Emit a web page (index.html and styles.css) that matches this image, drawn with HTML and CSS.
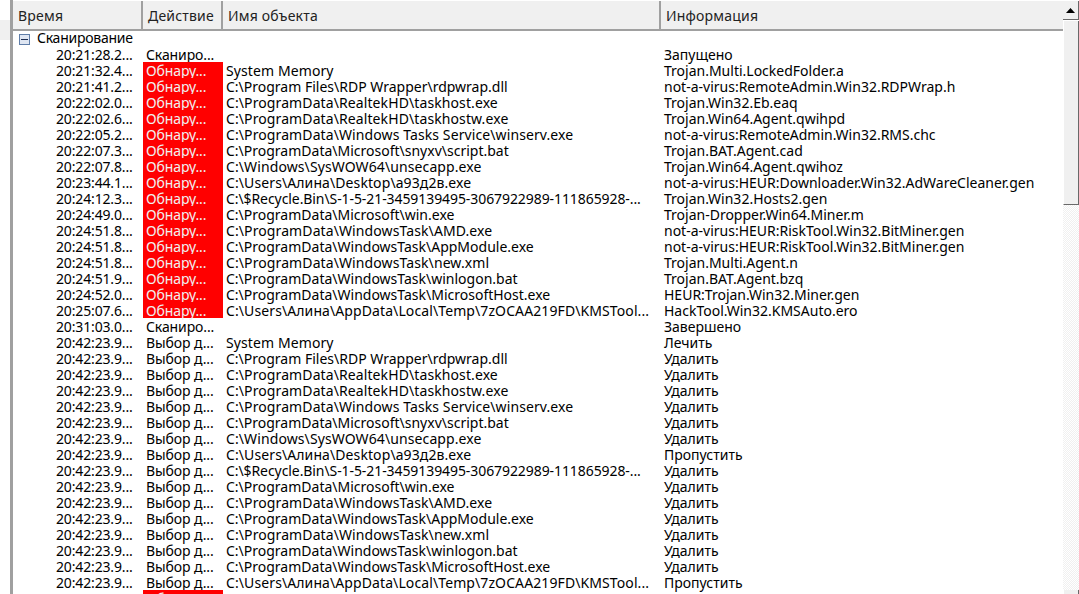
FILE: index.html
```html
<!DOCTYPE html>
<html lang="ru">
<head>
<meta charset="utf-8">
<title>Отчёт</title>
<link rel="stylesheet" href="styles.css">
</head>
<body>
<div class="app">
  <div class="strip"><div class="strip-block"></div></div>
  <div class="main">
    <div class="head">
      <div class="hc hc-time">Время</div>
      <div class="hc hc-act">Действие</div>
      <div class="hc hc-obj">Имя объекта</div>
      <div class="hc hc-info">Информация</div>
    </div>
    <div class="list">
      <div class="group"><svg class="tog" width="11" height="11" viewBox="0 0 11 11"><rect x="0.5" y="0.5" width="10" height="10" fill="#dfe6f2" stroke="#5f7da8"/><rect x="2" y="5" width="7" height="1" fill="#1c2c50"/></svg><span>Сканирование</span></div>
      <div class="row"><span>20:21:28.2...</span><span>Сканиро...</span><span></span><span>Запущено</span></div>
      <div class="row det"><span>20:21:32.4...</span><span>Обнару...</span><span>System Memory</span><span>Trojan.Multi.LockedFolder.a</span></div>
      <div class="row det"><span>20:21:41.2...</span><span>Обнару...</span><span class="snug">C:\Program Files\RDP Wrapper\rdpwrap.dll</span><span>not-a-virus:RemoteAdmin.Win32.RDPWrap.h</span></div>
      <div class="row det"><span>20:22:02.0...</span><span>Обнару...</span><span>C:\ProgramData\RealtekHD\taskhost.exe</span><span>Trojan.Win32.Eb.eaq</span></div>
      <div class="row det"><span>20:22:02.6...</span><span>Обнару...</span><span>C:\ProgramData\RealtekHD\taskhostw.exe</span><span>Trojan.Win64.Agent.qwihpd</span></div>
      <div class="row det"><span>20:22:05.2...</span><span>Обнару...</span><span>C:\ProgramData\Windows Tasks Service\winserv.exe</span><span>not-a-virus:RemoteAdmin.Win32.RMS.chc</span></div>
      <div class="row det"><span>20:22:07.3...</span><span>Обнару...</span><span class="snug">C:\ProgramData\Microsoft\snyxv\script.bat</span><span>Trojan.BAT.Agent.cad</span></div>
      <div class="row det"><span>20:22:07.8...</span><span>Обнару...</span><span>C:\Windows\SysWOW64\unsecapp.exe</span><span>Trojan.Win64.Agent.qwihoz</span></div>
      <div class="row det"><span>20:23:44.1...</span><span>Обнару...</span><span>C:\Users\Алина\Desktop\а93д2в.exe</span><span>not-a-virus:HEUR:Downloader.Win32.AdWareCleaner.gen</span></div>
      <div class="row det"><span>20:24:12.3...</span><span>Обнару...</span><span class="tight">C:\$Recycle.Bin\S-1-5-21-3459139495-3067922989-111865928-...</span><span>Trojan.Win32.Hosts2.gen</span></div>
      <div class="row det"><span>20:24:49.0...</span><span>Обнару...</span><span class="snug">C:\ProgramData\Microsoft\win.exe</span><span>Trojan-Dropper.Win64.Miner.m</span></div>
      <div class="row det"><span>20:24:51.8...</span><span>Обнару...</span><span>C:\ProgramData\WindowsTask\AMD.exe</span><span>not-a-virus:HEUR:RiskTool.Win32.BitMiner.gen</span></div>
      <div class="row det"><span>20:24:51.8...</span><span>Обнару...</span><span class="snug">C:\ProgramData\WindowsTask\AppModule.exe</span><span>not-a-virus:HEUR:RiskTool.Win32.BitMiner.gen</span></div>
      <div class="row det"><span>20:24:51.8...</span><span>Обнару...</span><span>C:\ProgramData\WindowsTask\new.xml</span><span>Trojan.Multi.Agent.n</span></div>
      <div class="row det"><span>20:24:51.9...</span><span>Обнару...</span><span class="snug">C:\ProgramData\WindowsTask\winlogon.bat</span><span>Trojan.BAT.Agent.bzq</span></div>
      <div class="row det"><span>20:24:52.0...</span><span>Обнару...</span><span class="snug">C:\ProgramData\WindowsTask\MicrosoftHost.exe</span><span>HEUR:Trojan.Win32.Miner.gen</span></div>
      <div class="row det"><span>20:25:07.6...</span><span>Обнару...</span><span>C:\Users\Алина\AppData\Local\Temp\7zOCAA219FD\KMSTool...</span><span>HackTool.Win32.KMSAuto.ero</span></div>
      <div class="row"><span>20:31:03.0...</span><span>Сканиро...</span><span></span><span>Завершено</span></div>
      <div class="row"><span>20:42:23.9...</span><span>Выбор д...</span><span>System Memory</span><span>Лечить</span></div>
      <div class="row"><span>20:42:23.9...</span><span>Выбор д...</span><span class="snug">C:\Program Files\RDP Wrapper\rdpwrap.dll</span><span>Удалить</span></div>
      <div class="row"><span>20:42:23.9...</span><span>Выбор д...</span><span>C:\ProgramData\RealtekHD\taskhost.exe</span><span>Удалить</span></div>
      <div class="row"><span>20:42:23.9...</span><span>Выбор д...</span><span>C:\ProgramData\RealtekHD\taskhostw.exe</span><span>Удалить</span></div>
      <div class="row"><span>20:42:23.9...</span><span>Выбор д...</span><span>C:\ProgramData\Windows Tasks Service\winserv.exe</span><span>Удалить</span></div>
      <div class="row"><span>20:42:23.9...</span><span>Выбор д...</span><span class="snug">C:\ProgramData\Microsoft\snyxv\script.bat</span><span>Удалить</span></div>
      <div class="row"><span>20:42:23.9...</span><span>Выбор д...</span><span>C:\Windows\SysWOW64\unsecapp.exe</span><span>Удалить</span></div>
      <div class="row"><span>20:42:23.9...</span><span>Выбор д...</span><span>C:\Users\Алина\Desktop\а93д2в.exe</span><span>Пропустить</span></div>
      <div class="row"><span>20:42:23.9...</span><span>Выбор д...</span><span class="tight">C:\$Recycle.Bin\S-1-5-21-3459139495-3067922989-111865928-...</span><span>Удалить</span></div>
      <div class="row"><span>20:42:23.9...</span><span>Выбор д...</span><span class="snug">C:\ProgramData\Microsoft\win.exe</span><span>Удалить</span></div>
      <div class="row"><span>20:42:23.9...</span><span>Выбор д...</span><span>C:\ProgramData\WindowsTask\AMD.exe</span><span>Удалить</span></div>
      <div class="row"><span>20:42:23.9...</span><span>Выбор д...</span><span class="snug">C:\ProgramData\WindowsTask\AppModule.exe</span><span>Удалить</span></div>
      <div class="row"><span>20:42:23.9...</span><span>Выбор д...</span><span>C:\ProgramData\WindowsTask\new.xml</span><span>Удалить</span></div>
      <div class="row"><span>20:42:23.9...</span><span>Выбор д...</span><span class="snug">C:\ProgramData\WindowsTask\winlogon.bat</span><span>Удалить</span></div>
      <div class="row"><span>20:42:23.9...</span><span>Выбор д...</span><span class="snug">C:\ProgramData\WindowsTask\MicrosoftHost.exe</span><span>Удалить</span></div>
      <div class="row"><span>20:42:23.9...</span><span>Выбор д...</span><span>C:\Users\Алина\AppData\Local\Temp\7zOCAA219FD\KMSTool...</span><span>Пропустить</span></div>
      <div class="row det"><span>20:42:51.7...</span><span>Обнару...</span><span></span><span>Активно</span></div>
    </div>
  </div>
  <div class="scroll">
    <div class="sb-btn"><svg width="9" height="5" viewBox="0 0 9 5"><path d="M4.5 0 9 5H0z" fill="#000"/></svg></div>
    <div class="sb-thumb"></div>
    <div class="sb-track"></div>
    <div class="sb-end"></div>
  </div>
</div>
</body>
</html>
```
FILE: styles.css
```css
html, body { margin: 0; padding: 0; background: #fff; }
body { width: 1079px; height: 594px; overflow: hidden; font-family: "Noto Sans", sans-serif; color: #000; }
.app { display: flex; height: 594px; }
.strip { width: 10px; flex: none; padding-top: 20px; box-sizing: border-box; }
.strip-block { height: 20px; background: #f0f0f0; }
.main { width: 1050px; flex: none; border-left: 3px solid #a0a0a0; overflow: hidden; }
.head { display: grid; grid-template-columns: 130px 80px 438px 1fr; height: 28px; margin-top: 1px; background: #f0f0f0; border-bottom: 2px solid #a0a0a0; font-size: 14px; }
.hc { display: flex; align-items: center; padding-left: 5px; border-right: 2px solid #a0a0a0; color: #222; letter-spacing: 0.2px; }
.hc-info { border-right: 0; }
.list { font-size: 14px; line-height: 16px; }
.group { height: 16px; display: flex; align-items: center; padding-left: 6px; gap: 7px; margin-top: -1px; letter-spacing: -0.25px; }
.tog { flex: none; margin-top: 2px; }
.row { display: grid; grid-template-columns: 130px 80px 438px 1fr; grid-template-rows: 16px; height: 16px; white-space: nowrap; line-height: 18px; }
.row span { display: block; }
.row span:nth-child(1) { padding-left: 43px; letter-spacing: -0.15px; }
.row span:nth-child(2) { padding-left: 3px; letter-spacing: -0.1px; }
.row span:nth-child(3) { padding-left: 3px; letter-spacing: 0.1px; }
.row span:nth-child(3).snug { letter-spacing: 0; }
.row span:nth-child(3).tight { letter-spacing: -0.08px; }
.row span:nth-child(4) { padding-left: 3px; }
.det span:nth-child(2) { background: #ff0000; color: #f0f0f0; }
.scroll { width: 16px; flex: none; display: flex; flex-direction: column; background: #fff; }
.sb-btn { height: 19px; margin-top: 1px; background: #f0f0f0; border-bottom: 1px solid #696969; border-right: 1px solid #696969; display: flex; align-items: center; justify-content: center; box-sizing: border-box; }
.sb-thumb { height: 184px; margin-top: 1px; background: #f0f0f0; border-left: 1px solid #fff; border-right: 1px solid #696969; border-bottom: 1px solid #696969; box-sizing: border-box; }
.sb-track { flex: 1; background: repeating-conic-gradient(#f0f0f0 0 25%, #fff 0 50%) 0 0 / 2px 2px; }
.sb-end { height: 4px; background: #f0f0f0; border-left: 1px solid #fff; border-right: 1px solid #696969; box-sizing: border-box; }
```
